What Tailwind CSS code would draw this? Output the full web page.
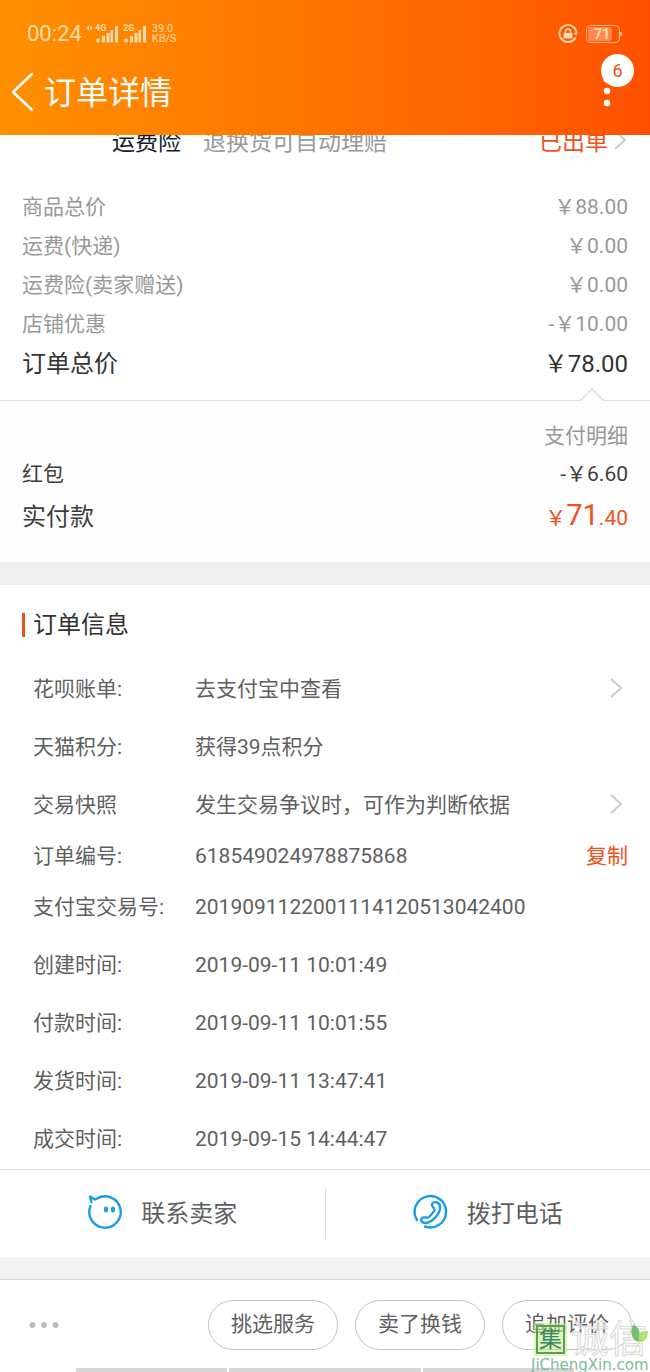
<!DOCTYPE html>
<html lang="zh-CN">
<head>
  <meta charset="UTF-8">
  <meta name="viewport" content="width=device-width, initial-scale=1.0">
  <title>订单详情</title>
  <script src="https://cdn.jsdelivr.net/npm/@tailwindcss/browser@4"></script>
</head>
<body class="bg-white text-[21px] text-[#5f5f5f] font-[family-name:Roboto,'Noto_Sans_CJK_SC',sans-serif]">

  <!-- Header -->
  <header class="bg-linear-to-r from-[#ff9000] to-[#ff5000] pb-[13px] text-white">
    <div class="flex h-16 items-center justify-between pt-1 pr-7 pl-[27px] text-[#ffdcae]">
      <div class="flex items-center gap-1">
        <span class="text-[22px] leading-6">00:24</span>
        <svg class="h-5 w-[62px]" viewBox="0 0 62 20" fill="currentColor">
          <path d="M0 4l3-2.500v5zM7 4l-3-2.500v5z"/>
          <text x="9" y="7" font-size="9" font-weight="700">4G</text>
          <circle cx="12" cy="16.500" r="2"/>
          <rect x="16" y="12" width="3" height="6.500"/>
          <rect x="20.500" y="9" width="3" height="9.500"/>
          <rect x="24.500" y="6" width="2.500" height="12.500"/>
          <rect x="29" y="2" width="3" height="16.500"/>
          <text x="37" y="7" font-size="9" font-weight="700">2G</text>
          <circle cx="40" cy="16.500" r="2"/>
          <rect x="44" y="12" width="3" height="6.500"/>
          <rect x="48.500" y="9" width="3" height="9.500"/>
          <rect x="52.500" y="6" width="2.500" height="12.500"/>
          <rect x="57" y="2" width="3" height="16.500"/>
        </svg>
        <span class="text-[11px] leading-[10px]">39.0<br>KB/S</span>
      </div>
      <div class="flex items-center gap-2">
        <svg class="size-5" viewBox="0 0 20 20" fill="none" stroke="currentColor" stroke-width="1.800">
          <path d="M17.500 13.500A8.500 8.500 0 1 1 18.500 9.500"/>
          <path d="M15.500 9.500l3 2.500.500-4z" fill="currentColor" stroke="none"/>
          <rect x="5.500" y="9" width="9" height="5.500" fill="currentColor" stroke="none"/>
          <path d="M7.500 9.500V7.500a2.500 2.500 0 0 1 5 0V9.500" stroke-width="1.500"/>
        </svg>
        <div class="flex items-center">
          <div class="h-[18px] w-[34px] rounded-[5px] border border-[#ffb98a] p-px">
            <div class="h-full w-[24px] rounded-[3px] bg-white/30 text-center text-[14px] leading-[14px] font-bold"><span class="pl-1">71</span></div>
          </div>
          <div class="h-1 w-[2px] bg-[#ffb98a]"></div>
        </div>
      </div>
    </div>
    <div class="flex h-[58px] items-center justify-between pr-[37px] pl-3">
      <div class="flex items-center gap-2">
        <button type="button" aria-label="返回">
          <svg class="h-10 w-6" viewBox="0 0 24 40" fill="none" stroke="currentColor" stroke-width="2.500" stroke-linecap="round" stroke-linejoin="round"><path d="M20 1L1 19L20 37"/></svg>
        </button>
        <h1 class="text-[32px] leading-[46px]">订单详情</h1>
      </div>
      <button type="button" aria-label="更多" class="relative pb-1">
        <svg class="h-8 w-3" viewBox="0 0 12 32" fill="currentColor"><circle cx="6" cy="4" r="3.500"/><circle cx="6" cy="16" r="3.200"/><circle cx="6" cy="28" r="3.200"/></svg>
        <span class="absolute -top-[21px] left-0 size-[33px] rounded-full bg-white text-center text-[18px] leading-[33px] text-[#f0501a]">6</span>
      </button>
    </div>
  </header>

  <main>
    <!-- Freight insurance, half scrolled under the header -->
    <a href="#" class="flex h-5 items-end overflow-hidden pr-6 pl-28 text-[23px] leading-[24px]">
      <span class="text-[#101c28]">运费险</span>
      <span class="ml-[22px] grow text-[#999]">退换货可自动理赔</span>
      <span class="text-[#f0501a]">已出单</span>
      <svg class="mb-1 ml-[6px] h-[22px] w-3" viewBox="0 0 12 22" fill="none" stroke="#ccc" stroke-width="2"><path d="M1 2l10 9L1 20"/></svg>
    </a>

    <!-- Prices -->
    <section class="px-[22px] pt-[33px] pb-4 text-[#999]">
      <div class="flex justify-between leading-[39px]"><span>商品总价</span><span>￥88.00</span></div>
      <div class="flex justify-between leading-[39px]"><span>运费(快递)</span><span>￥0.00</span></div>
      <div class="flex justify-between leading-[39px]"><span>运费险(卖家赠送)</span><span>￥0.00</span></div>
      <div class="flex justify-between leading-[39px]"><span>店铺优惠</span><span>-￥10.00</span></div>
      <div class="flex justify-between text-[24px] leading-[40px] text-[#333]"><span>订单总价</span><span>￥78.00</span></div>
    </section>

    <section class="relative border-t border-[#e3e3e3] bg-[#fdfdfd] px-[22px] pt-4 pb-[22px] text-[#3d3d3d]">
      <svg class="absolute -top-[13px] right-[46px] h-[14px] w-6" viewBox="0 0 24 14"><path d="M0 13L12 1L24 13V14H0z" fill="#fdfdfd"/><path d="M0 13L12 1L24 13" fill="none" stroke="#e3e3e3" stroke-width="1.500"/></svg>
      <div class="text-right leading-[38px] text-[#999]">支付明细</div>
      <div class="flex justify-between leading-[38px]"><span>红包</span><span>-￥6.60</span></div>
      <div class="flex items-baseline justify-between leading-[44px]"><span class="text-[24px]">实付款</span><span class="text-[#f0501a]">￥<span class="text-[29px]">71</span>.40</span></div>
    </section>

    <!-- Order info -->
    <section class="border-t-[23px] border-[#f0f0f0]">
      <div class="flex h-[76px] items-center gap-2 px-[22px] pt-1">
        <span class="h-6 w-[3px] bg-[#f0501a]"></span>
        <h2 class="text-[24px] text-[#333]">订单信息</h2>
      </div>
      <dl class="pr-[22px] pl-[33px]">
        <div class="flex h-[58px] items-center">
          <dt class="w-[162px]">花呗账单:</dt>
          <dd class="flex grow items-center justify-between">去支付宝中查看
            <svg class="mr-1 mb-1 h-5 w-[14px]" viewBox="0 0 14 20" fill="none" stroke="#ccc" stroke-width="2"><path d="M1 1l10 9L1 19"/></svg>
          </dd>
        </div>
        <div class="flex h-[58px] items-center"><dt class="w-[162px]">天猫积分:</dt><dd>获得39点积分</dd></div>
        <div class="flex h-[58px] items-center">
          <dt class="w-[162px]">交易快照</dt>
          <dd class="flex grow items-center justify-between">发生交易争议时，可作为判断依据
            <svg class="mr-1 mb-1 h-5 w-[14px]" viewBox="0 0 14 20" fill="none" stroke="#ccc" stroke-width="2"><path d="M1 1l10 9L1 19"/></svg>
          </dd>
        </div>
        <div class="flex h-11 items-center">
          <dt class="w-[162px]">订单编号:</dt>
          <dd class="flex grow items-center justify-between">618549024978875868 <button type="button" class="text-[#f0501a]">复制</button></dd>
        </div>
        <div class="flex h-[58px] items-center"><dt class="w-[162px]">支付宝交易号:</dt><dd>2019091122001114120513042400</dd></div>
        <div class="flex h-[58px] items-center"><dt class="w-[162px]">创建时间:</dt><dd>2019-09-11 10:01:49</dd></div>
        <div class="flex h-[58px] items-center"><dt class="w-[162px]">付款时间:</dt><dd>2019-09-11 10:01:55</dd></div>
        <div class="flex h-[58px] items-center"><dt class="w-[162px]">发货时间:</dt><dd>2019-09-11 13:47:41</dd></div>
        <div class="flex h-[58px] items-center"><dt class="w-[162px]">成交时间:</dt><dd>2019-09-15 14:44:47</dd></div>
      </dl>
    </section>

    <!-- Contact -->
    <section class="flex h-[88px] items-center border-t border-[#dcdcdc] text-[24px]">
      <button type="button" class="flex flex-1 items-center justify-center gap-[18px]">
        <svg class="mb-1 size-9" viewBox="0 0 36 36" fill="none" stroke="#1c9be6" stroke-width="2.400" stroke-linecap="round" stroke-linejoin="round">
          <path d="M3.500 12A15.700 15.700 0 1 0 10 4.500L8 5.500L3 2.500L4.500 8"/>
          <path d="M19 14.500v2M26 14.500v2" stroke-width="4"/>
        </svg>
        联系卖家
      </button>
      <span class="h-[51px] w-px bg-[#dcdcdc]"></span>
      <button type="button" class="flex flex-1 items-center justify-center gap-[18px]">
        <svg class="mb-1 size-9" viewBox="0 0 36 36" fill="none" stroke="#1c9be6" stroke-width="2.400" stroke-linecap="round" stroke-linejoin="round">
          <path d="M4 26A15.700 15.700 0 1 1 12 32.500"/>
          <path d="M19 10C20 7.500 26 7 27 12C28 19 20 28 13 29C9 29.500 7 26 9 24C11 22 14 25 16 23C18 21 20 19 21.500 16.500C22.500 14 18 13 19 10Z"/>
        </svg>
        拨打电话
      </button>
    </section>
    <div class="h-[22px] bg-[#f2f2f2]"></div>
  </main>

  <!-- Bottom bar -->
  <footer class="relative overflow-hidden border-t border-[#dcdcdc]">
    <div class="flex items-center gap-[17px] pt-5 pr-[18px] pb-[18px] pl-[29px]">
      <button type="button" aria-label="更多操作" class="mr-auto">
        <svg class="h-[6px] w-[30px]" viewBox="0 0 30 6" fill="#bcbcbc"><circle cx="3.500" cy="3" r="3"/><circle cx="15" cy="3" r="3"/><circle cx="26.500" cy="3" r="3"/></svg>
      </button>
      <button type="button" class="h-[50px] w-[130px] rounded-full border border-[#c4c4c4]">挑选服务</button>
      <button type="button" class="h-[50px] w-[130px] rounded-full border border-[#c4c4c4]">卖了换钱</button>
      <button type="button" class="h-[50px] w-[130px] rounded-full border border-[#c4c4c4]">追加评价</button>
    </div>
    <div class="flex h-1 gap-[2px] pr-[76px] pl-[76px]">
      <span class="w-[151px] bg-[#d6d6d6]"></span>
      <span class="w-[192px] bg-[#d6d6d6]"></span>
      <span class="grow bg-[#d6d6d6]"></span>
    </div>

    <!-- Site watermark -->
    <div class="pointer-events-none absolute right-0 bottom-0 w-[120px]">
      <div class="flex items-center gap-1 pl-1">
        <span class="bg-[#c5ef8b]/60 p-[2px]"><span class="block size-[29px] border-2 border-[#5b9d60] text-center text-[23px] leading-[25px] text-[#3f8464]">集</span></span>
        <span class="text-[38px] leading-[38px] whitespace-nowrap text-white/60 [-webkit-text-stroke:1px_#d8d8d8]">诚信</span>
      </div>
      <svg class="absolute top-1 right-0 h-8 w-5" viewBox="0 0 20 32"><path d="M3 1C8 2 11 7 9 18C1 16 0 8 3 1Z" fill="#62b558" fill-opacity=".85"/><path d="M18 7C11 6 7 11 9 18C15 19 18 14 18 7Z" fill="#a5dc62" fill-opacity=".85"/><path d="M9 17C8 24 5 28 0 31" fill="none" stroke="#c4e69c"/></svg>
      <div class="pl-px text-[15px] leading-[14px] text-[#7fbd92] font-[family-name:'DejaVu_Sans',sans-serif]">JiChengXin.com</div>
    </div>
  </footer>

</body>
</html>
